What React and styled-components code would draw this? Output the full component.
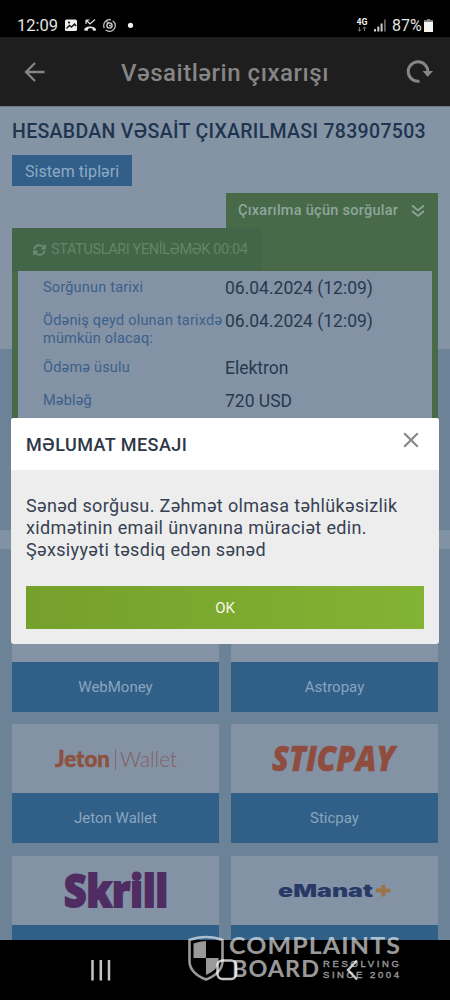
import React from 'react';
import styled, { createGlobalStyle } from 'styled-components';

const details = [
  { label: 'Sorğunun tarixi', value: '06.04.2024 (12:09)', height: 33 },
  { label: 'Ödəniş qeyd olunan tarixdə mümkün olacaq:', value: '06.04.2024 (12:09)', height: 47 },
  { label: 'Ödəmə üsulu', value: 'Elektron', height: 33 },
  { label: 'Məbləğ', value: '720 USD', height: 33 },
];

//Payment logos
const JetonLogo = () => (
  <svg width="207" height="69" viewBox="0 0 207 69">
    <text x="43" y="43" textLength="55" lengthAdjust="spacingAndGlyphs" fontFamily="Lato" fontWeight="900" fontSize="22" fill="#8d523f" stroke="#8d523f" strokeWidth="0.5">Jeton</text>
    <path d="M103.500 25v21" stroke="#8d6464" />
    <text x="108" y="43" textLength="57" lengthAdjust="spacingAndGlyphs" fontFamily="Lato" fontWeight="300" fontSize="22" fill="#865c61">Wallet</text>
  </svg>
);

const SticpayLogo = () => (
  <svg width="207" height="69" viewBox="0 0 207 69">
    <text x="41" y="47" textLength="123" lengthAdjust="spacingAndGlyphs" fontFamily="Open Sans" fontWeight="800" fontStyle="italic" fontSize="34.500" fill="#8f4d40" stroke="#8f4d40" strokeWidth="0.500">STICPAY</text>
  </svg>
);

const SkrillLogo = () => (
  <svg width="207" height="69" viewBox="0 0 207 69">
    <text x="52" y="50.500" textLength="104" lengthAdjust="spacingAndGlyphs" fontFamily="Open Sans" fontWeight="800" fontSize="43.500" fill="#4f2c62" stroke="#4f2c62" strokeWidth="1.800">Skrill</text>
  </svg>
);

const EmanatLogo = () => (
  <svg width="207" height="69" viewBox="0 0 207 69">
    <text x="47" y="41" textLength="95" lengthAdjust="spacingAndGlyphs" fontFamily="Inter" fontWeight="900" fontSize="17.500" fill="#293966">eManat</text>
    <path d="M145 34.500h14.500M152.300 29v11.500" stroke="#9b7348" strokeWidth="4" />
  </svg>
);

const systems = [
  { id: 'webmoney', name: 'WebMoney' },
  { id: 'astropay', name: 'Astropay' },
  { id: 'jeton', name: 'Jeton Wallet', logo: <JetonLogo /> },
  { id: 'sticpay', name: 'Sticpay', logo: <SticpayLogo /> },
  { id: 'skrill', logo: <SkrillLogo /> },
  { id: 'emanat', logo: <EmanatLogo /> },
];

const StatusIcons = () => (
  <svg width="74" height="16" viewBox="64 17 74 16">
    <rect x="65" y="19.500" width="12" height="11.500" rx="1.500" fill="#ececec" />
    <path d="M66.500 28.500l3-3 2 1.500 3-3 1.500 2" stroke="#111" strokeWidth="1.400" fill="none" />
    <circle cx="69" cy="22.500" r="1.100" fill="#111" />
    <path d="M86 20v4M86 20h3.500M86.500 20.500l3.500 3.500 5-4.500" stroke="#ddd" strokeWidth="1.200" fill="none" />
    <path d="M84.200 30.500c-.6-5.500 12.200-5.500 12 0l-3.200.2-.6-2.200c-1.400-.5-2.600-.5-4 0l-.7 2.200z" fill="#e6e6e6" />
    <circle cx="109.500" cy="25.500" r="5.800" fill="none" stroke="#d0d0d0" strokeWidth="1.200" strokeDasharray="13 2" />
    <circle cx="109.500" cy="25.500" r="2.600" fill="none" stroke="#d0d0d0" strokeWidth="1.400" />
    <circle cx="110" cy="25.500" r="1" fill="#d0d0d0" />
    <path d="M106 21.500l3 1.500" stroke="#d0d0d0" />
    <circle cx="130.500" cy="25.300" r="2.600" fill="#f2f2f2" />
  </svg>
);

const SignalIcons = () => (
  <svg width="32" height="18" viewBox="355 16 32 18">
    <text x="356.500" y="25" textLength="11" lengthAdjust="spacingAndGlyphs" fontFamily="Roboto" fontWeight="700" fontSize="8.500" fill="#eee">4G</text>
    <path d="M359.500 27v4M357.800 29.500l1.700 1.700 1.700-1.700M364.500 31v-4M362.800 28.700l1.700-1.700 1.700 1.700" stroke="#777" fill="none" />
    <path d="M375 29v2.500M378.300 26.500v5M381.600 23.500v8" stroke="#ccc" strokeWidth="2" />
    <path d="M384.900 19.500v12" stroke="#666" strokeWidth="1.800" />
  </svg>
);

const Watermark = () => (
  <WatermarkSvg width="215" height="50" viewBox="187 933 215 50">
    <g fill="#fff">
      <path d="M206 937q9 0 16.500 3v21q0 12-16.500 18.500-16.500-6.500-16.500-18.500v-21q7.500-3 16.500-3z" fill="none" stroke="#fff" strokeWidth="2.600" />
      <path d="M206 941v17h-12.500v-14.500q6-2.500 12.500-2.500zM206 958h12.500v3q0 9-12.500 14z" />
      <g fontFamily="Lato" fontWeight="700" letterSpacing="1">
        <text x="229" y="954" fontSize="22.500" textLength="172" lengthAdjust="spacingAndGlyphs">COMPLAINTS</text>
        <text x="232" y="976.800" fontSize="22.500" textLength="88" lengthAdjust="spacingAndGlyphs">BOARD</text>
      </g>
      <g fontFamily="Liberation Sans" fontSize="9.500" stroke="#fff" strokeWidth="0.300">
        <text x="323" y="966.500" textLength="76">RESOLVING</text>
        <text x="323" y="977.500" textLength="76">SINCE 2004</text>
      </g>
    </g>
  </WatermarkSvg>
);

const App = () => {
  return (
    <Screen>
      <GlobalStyle />
      <StatusBar>
        <Clock>12:09</Clock>
        <StatusIcons />
        <Spacer />
        <SignalIcons />
        <Battery>87%</Battery>
        <svg width="9" height="13" viewBox="0 0 9 13">
          <path d="M3 0h3v1.500H9V13H0V1.500h3z" fill="#f4f4f4" />
          <path d="M3 0h3v1.500H9v1.500H0V1.500h3z" fill="#888" />
        </svg>
      </StatusBar>

      <Header>
        <svg width="24" height="24" viewBox="0 0 24 24" fill="none" stroke="#858585" strokeWidth="2.300">
          <path d="M21.500 12H3M12 3L3 12l9 9" />
        </svg>
        <HeaderTitle>Vəsaitlərin çıxarışı</HeaderTitle>
        <svg width="28" height="26" viewBox="0 0 28 26">
          <path d="M13.500 22.200A9.800 9.800 0 1 1 21.800 13" fill="none" stroke="#858585" strokeWidth="3" />
          <path d="M16.500 12h10.500l-5.300 6z" fill="#858585" />
        </svg>
      </Header>

      <Content>
        <Account>
          <AccountTitle>HESABDAN VƏSAİT ÇIXARILMASI 783907503</AccountTitle>
          <TypeButton>Sistem tipləri</TypeButton>
          <RequestsTab>
            <span>Çıxarılma üçün sorğular</span>
            <svg width="14" height="14" viewBox="0 0 14 14" fill="none" stroke="#8fa69d" strokeWidth="1.700">
              <path d="M1 1.500l6 5 6-5M1 7l6 5 6-5" />
            </svg>
          </RequestsTab>
        </Account>

        <Requests>
          <RefreshButton>
            <svg width="13" height="12" viewBox="0 0 13 12" fill="none" stroke="#6d8c71" strokeWidth="1.800">
              <path d="M1.300 5.300C2 .6 8.500-.2 10.800 3.500M11.700 6.700C11 11.400 4.500 12.200 2.200 8.500" />
              <path d="M12 .8v3.700H8.300M1 11.200V7.500h3.700" />
            </svg>
            <span>STATUSLARI YENİLƏMƏK 00:04</span>
          </RefreshButton>
          <RequestDetails>
            {details.map(row => (
              <DetailRow key={row.label} $height={row.height}>
                <DetailLabel>{row.label}</DetailLabel>
                <DetailValue>{row.value}</DetailValue>
              </DetailRow>
            ))}
          </RequestDetails>
        </Requests>
        <Divider />

        <Systems>
          {systems.map(system => (
            <SystemCard key={system.id}>
              <SystemLogo>{system.logo}</SystemLogo>
              <SystemName>{system.name}</SystemName>
            </SystemCard>
          ))}
        </Systems>
      </Content>

      <NavBar>
        <svg width="450" height="60" viewBox="0 940 450 60" fill="none" stroke="#c4c4c4" strokeWidth="2.500">
          <path d="M92.500 960v20.500M100.800 960v20.500M109 960v20.500" />
          <rect x="217.500" y="960.500" width="18.500" height="18.500" rx="5" />
          <path d="M357 960.500l-9 9.500 9 9.500" />
        </svg>
      </NavBar>

      {/* Message dialog */}
      <Dialog>
        <DialogHeader>
          <span>MƏLUMAT MESAJI</span>
          <svg width="16" height="16" viewBox="0 0 16 16" stroke="#8b8b8b" strokeWidth="2.300">
            <path d="M1.200 1.200l13.600 13.600M14.800 1.200L1.200 14.800" />
          </svg>
        </DialogHeader>
        <DialogBody>
          <p>
            Sənəd sorğusu. Zəhmət olmasa təhlükəsizlik<br />
            xidmətinin email ünvanına müraciət edin.<br />
            Şəxsiyyəti təsdiq edən sənəd
          </p>
          <OkButton>OK</OkButton>
        </DialogBody>
      </Dialog>
      <Watermark />
    </Screen>
  );
};

//Component Styles
const GlobalStyle = createGlobalStyle`
  * {
    box-sizing: border-box;
  }

  body {
    margin: 0;
    background: #000;
    font-family: Roboto, "Noto Sans", sans-serif;
  }

  svg {
    display: block;
    flex-shrink: 0;
  }

  button {
    border: 0;
    font-family: inherit;
  }
`;

const Screen = styled.div`
  position: relative;
  display: flex;
  flex-direction: column;
  width: 450px;
  height: 1000px;
  overflow: hidden;
`;

const StatusBar = styled.div`
  display: flex;
  align-items: center;
  height: 37px;
  padding: 13px 17px 0 17px;
  background: #000;
  color: #e4e4e4;
`;

const Clock = styled.span`
  width: 47px;
  font-size: 16.5px;
  white-space: nowrap;
`;

const Spacer = styled.div`
  flex: 1;
`;

const Battery = styled.span`
  width: 32px;
  margin-left: 5px;
  font-size: 16px;
  white-space: nowrap;
`;

const Header = styled.header`
  display: flex;
  align-items: center;
  justify-content: space-between;
  height: 69px;
  padding: 0 16px 0 23px;
  background: #1e1e1e;
`;

const HeaderTitle = styled.h1`
  margin: 2px 3px 0 0;
  color: #858585;
  font-size: 24px;
  font-weight: 500;
  letter-spacing: 0.53px;
  white-space: nowrap;
`;

const Content = styled.main`
  display: flex;
  flex-direction: column;
  height: 834px;
  overflow: hidden;
  background: linear-gradient(#8494a5 243px, #6c8397 243px);
`;

const Account = styled.section`
  display: flex;
  flex-direction: column;
  align-items: flex-start;
  height: 122px;
  padding: 13px 12px 0 12px;
  border-top: 1px solid #707987;
`;

const AccountTitle = styled.h2`
  margin: 0;
  color: #20344f;
  font-size: 19.5px;
  font-weight: 500;
  letter-spacing: 0.31px;
  line-height: 24px;
  white-space: nowrap;
`;

const TypeButton = styled.button`
  height: 31px;
  width: 120px;
  margin-top: 11px;
  padding: 1px 0 0;
  background: #315f8a;
  color: #8faac3;
  font-size: 16px;
  letter-spacing: 0.08px;
  white-space: nowrap;
`;

const RequestsTab = styled.div`
  display: flex;
  align-items: center;
  align-self: flex-end;
  justify-content: space-between;
  width: 212px;
  height: 35px;
  margin-top: 7px;
  padding: 0 13px 0 12px;
  background: #486a49;
  color: #8fa69d;
  font-size: 14.5px;
  font-weight: 500;
  letter-spacing: 0.27px;
  white-space: nowrap;
`;

const Requests = styled.section`
  flex-shrink: 0;
  height: 302px;
  margin: 0 12px;
  padding: 0 6px 5px;
  background: #486a49;
`;

const RefreshButton = styled.div`
  display: flex;
  align-items: center;
  gap: 5px;
  width: 250px;
  height: 43px;
  margin-left: -6px;
  padding-left: 21px;
  background: #436648;
  color: #638567;
  font-size: 14.5px;
  letter-spacing: -0.38px;
  white-space: nowrap;
`;

const RequestDetails = styled.div`
  height: 254px;
  padding: 7px 10px 0 25px;
  background: #8393a5;
`;

const DetailRow = styled.div`
  display: grid;
  grid-template-columns: 182px 1fr;
  height: ${props => props.$height}px;
`;

const DetailLabel = styled.div`
  padding-top: 1px;
  color: #3c608a;
  font-size: 14.5px;
  letter-spacing: 0.2px;
  line-height: 17.5px;
`;

const DetailValue = styled.div`
  color: #28394e;
  font-size: 17.5px;
  line-height: 20px;
  white-space: nowrap;
`;

const Divider = styled.div`
  flex-shrink: 0;
  height: 19px;
  background: #8192a4;
`;

const Systems = styled.section`
  display: grid;
  grid-template-columns: 1fr 1fr;
  gap: 12.5px 12px;
  padding: 43.5px 12px 0;
`;

const SystemCard = styled.div`
  height: 119px;
`;

const SystemLogo = styled.div`
  height: 69px;
  background: #8393a5;
`;

const SystemName = styled.div`
  height: 50px;
  background: #305f88;
  color: #8ba5be;
  font-size: 15px;
  line-height: 50px;
  text-align: center;
`;

const NavBar = styled.nav`
  height: 60px;
  background: #000;
`;

const Dialog = styled.div`
  position: absolute;
  top: 418px;
  left: 11px;
  width: 428px;
  height: 226px;
  overflow: hidden;
  border-radius: 3px;
  background: #ededed;
`;

const DialogHeader = styled.div`
  display: flex;
  align-items: center;
  justify-content: space-between;
  height: 52px;
  padding: 0 20px 0 15px;
  background: #fff;
  color: #2d3745;
  font-size: 18px;
  font-weight: 500;
  letter-spacing: 0.46px;
  white-space: nowrap;

  svg {
    margin-top: -8px;
  }
`;

const DialogBody = styled.div`
  padding: 25px 15px 0;

  p {
    margin: 0;
    color: #364152;
    font-size: 18px;
    letter-spacing: 0.36px;
    line-height: 22px;
    white-space: nowrap;
  }
`;

const OkButton = styled.button`
  display: block;
  width: 398px;
  height: 43px;
  margin-top: 25px;
  background: linear-gradient(90deg, #75a02c, #83b333);
  color: #f4f8e8;
  font-size: 15px;
`;

const WatermarkSvg = styled.svg`
  position: absolute;
  top: 933px;
  left: 187px;
  opacity: 0.6;
`;

export default App;
